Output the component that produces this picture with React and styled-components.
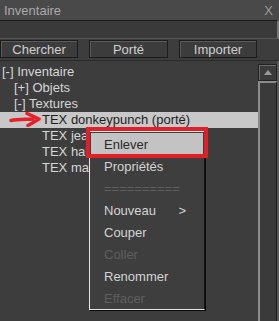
import React from 'react';
import styled, { createGlobalStyle } from 'styled-components';

const GlobalStyle = createGlobalStyle`
  html, body {
    margin: 0;
    padding: 0;
    background: #3d3d3d;
  }
`;

const treeItems = [
  { label: '[-] Inventaire', indent: 2 },
  { label: '[+] Objets', indent: 14 },
  { label: '[-] Textures', indent: 14 },
  { label: 'TEX donkeypunch (porté)', indent: 42, selected: true },
  { label: 'TEX jeans', indent: 42 },
  { label: 'TEX hair', indent: 42 },
  { label: 'TEX male', indent: 42 },
];

const menuItems = [
  { label: 'Enlever', active: true },
  { label: 'Propriétés' },
  { label: '==========', disabled: true },
  { label: 'Nouveau', arrow: true },
  { label: 'Couper' },
  { label: 'Coller', disabled: true },
  { label: 'Renommer' },
  { label: 'Effacer', disabled: true },
];

const App = () => {
  return (
    <Window>
      <GlobalStyle />
      <TitleBar>
        <span>Inventaire</span>
        <Close>X</Close>
      </TitleBar>
      <SearchBox />
      <ButtonRow>
        <ToolButton>Chercher</ToolButton>
        <ToolButton wide>Porté</ToolButton>
        <ToolButton>Importer</ToolButton>
      </ButtonRow>
      <Body>
        <Tree>
          {treeItems.map((item) => (
            <TreeRow key={item.label} indent={item.indent} selected={item.selected}>
              {item.label}
            </TreeRow>
          ))}
        </Tree>
        <ScrollBar>
          <ScrollUp>
            <svg width="8" height="5" viewBox="0 0 8 5">
              <polygon points="0,5 4,0 8,5" fill="#9a9a9a" />
            </svg>
          </ScrollUp>
          <ScrollTrack />
        </ScrollBar>
        <RightEdge />
      </Body>

      {/* red annotation arrow */}
      <Arrow width="32" height="15" viewBox="0 0 32 15">
        <path d="M2 8.5 C9 7.5 16 7.5 24 7" stroke="#e5202a" strokeWidth="3.5" fill="none" strokeLinecap="round" />
        <path d="M18 1.5 L30 7 L19 13.5" stroke="#e5202a" strokeWidth="3.5" fill="none" strokeLinejoin="round" strokeLinecap="round" />
      </Arrow>

      <Menu>
        {menuItems.map((item) => (
          <MenuItem key={item.label} active={item.active} disabled={item.disabled}>
            <span>{item.label}</span>
            {item.arrow && <span>&gt;</span>}
          </MenuItem>
        ))}
      </Menu>
      <RedBox />
    </Window>
  );
};

export default App;

const Window = styled.div`
  position: relative;
  width: 279px;
  height: 321px;
  overflow: hidden;
  background: #3d3d3d;
  font-family: 'Liberation Sans', Arial, sans-serif;
  font-size: 13px;
  color: #d6d6d6;
  display: flex;
  flex-direction: column;
`;

const TitleBar = styled.div`
  height: 20px;
  background: #494949;
  display: flex;
  align-items: center;
  justify-content: space-between;
  padding: 0 6px 0 4px;
  color: #a9a9a9;
  font-size: 13px;
`;

const Close = styled.span`
  color: #9a9a9a;
  font-size: 13px;
`;

const SearchBox = styled.div`
  height: 17px;
  background: #3a3a3a;
  border-top: 1px solid #1a1a1a;
  border-right: 2px solid #767676;
  border-bottom: 1px solid #555;
`;

const ButtonRow = styled.div`
  height: 20px;
  display: flex;
  gap: 11px;
  padding-top: 1px;
`;

const ToolButton = styled.div`
  width: ${({ wide }) => (wide ? '79px' : '78px')};
  height: 18px;
  box-sizing: border-box;
  border: 1px solid #1c1c1c;
  box-shadow: inset 1px 1px 0 #5a5a5a;
  background: #3c3c3c;
  color: #cfcfcf;
  display: flex;
  align-items: center;
  justify-content: center;
  font-size: 13px;
`;

const Body = styled.div`
  flex: 1;
  display: flex;
  border-top: 1px solid #2a2a2a;
`;

const Tree = styled.div`
  flex: 1;
  padding-top: 3px;
`;

const TreeRow = styled.div`
  height: 16px;
  line-height: 16px;
  padding-left: ${({ indent }) => indent}px;
  background: ${({ selected }) => (selected ? '#c8c8c8' : 'transparent')};
  color: ${({ selected }) => (selected ? '#1e1e1e' : '#d6d6d6')};
  white-space: nowrap;
  font-size: 13px;
`;

const ScrollBar = styled.div`
  width: 19px;
  display: flex;
  flex-direction: column;
  padding-top: 3px;
`;

const ScrollUp = styled.div`
  height: 17px;
  box-sizing: border-box;
  border: 1px solid #222;
  box-shadow: inset 1px 1px 0 #6a6a6a;
  background: #3b3b3b;
  display: flex;
  align-items: center;
  justify-content: center;
`;

const ScrollTrack = styled.div`
  flex: 1;
  box-sizing: border-box;
  border-left: 2px solid #8c8c8c;
  border-top: 2px solid #8c8c8c;
  border-right: 1px solid #1c1c1c;
  background: #3a3a3a;
`;

const RightEdge = styled.div`
  width: 2px;
  background: #5a5a5a;
`;

const Arrow = styled.svg`
  position: absolute;
  left: 9px;
  top: 112px;
`;

const Menu = styled.div`
  position: absolute;
  left: 89px;
  top: 131px;
  width: 116px;
  box-sizing: border-box;
  padding-top: 1px;
  background: #3e3e3e;
  border-left: 1px solid #e6e6e6;
  border-top: 1px solid #e6e6e6;
  border-bottom: 1px solid #e6e6e6;
  border-right: 1px solid #111;
  box-shadow: 1px 1px 0 #0a0a0a;
`;

const MenuItem = styled.div`
  height: 22px;
  display: flex;
  align-items: center;
  justify-content: space-between;
  padding: 0 17px 0 13px;
  margin: 0 1px;
  background: ${({ active }) => (active ? '#c3c3c3' : 'transparent')};
  color: ${({ active, disabled }) => (active ? '#2a2a2a' : disabled ? '#5e5e5e' : '#d4d4d4')};
  font-size: 13px;
`;

const RedBox = styled.div`
  position: absolute;
  left: 86px;
  top: 127px;
  width: 122px;
  height: 31px;
  box-sizing: border-box;
  border: 4px solid #e11f28;
`;
